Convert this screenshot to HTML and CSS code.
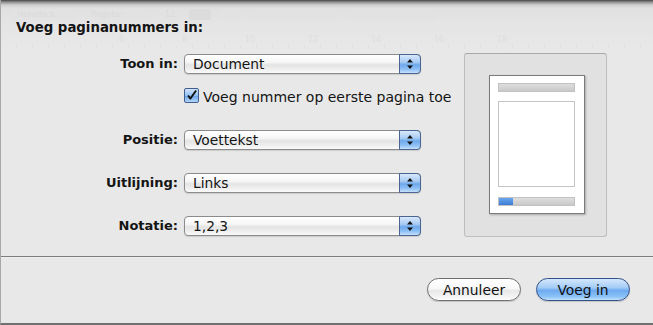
FILE: index.html
```html
<!DOCTYPE html>
<html>
<head>
<meta charset="utf-8">
<title>Voeg paginanummers in</title>
<link rel="stylesheet" href="styles.css">
</head>
<body>
<div class="sheet">

  <!-- window behind the sheet, seen through it -->
  <div class="ghost">
    <div class="ghost-bar">
      <span class="ghost-field wide">Helvetica</span>
      <span class="ghost-field wide">Regular</span>
      <span class="ghost-field">12</span>
      <span class="ghost-field dark"></span>
      <span class="ghost-field"></span>
      <span class="ghost-field long"></span>
      <span class="ghost-field long"></span>
    </div>
    <div class="ghost-ruler">
      <span>6</span><span>8</span><span>10</span><span>12</span><span>14</span><span>16</span><span>18</span>
    </div>
  </div>

  <div class="content">
    <h1 class="title">Voeg paginanummers in:</h1>

    <div class="main">
      <div class="form">
        <label class="lbl">Toon in:</label>
        <div class="popup">
          <span class="popup-text">Document</span>
          <span class="popup-arrows"><svg width="8" height="12" viewBox="0 0 8 12"><path d="M4 1 L7 4.5 L1 4.5 Z M4 11 L7 7.5 L1 7.5 Z" fill="#111"/></svg></span>
        </div>

        <span></span>
        <label class="check">
          <span class="box"><svg width="15" height="15" viewBox="0 0 15 15"><path d="M3.5 7.5 L6.3 11 L12.8 1.8" fill="none" stroke="#111" stroke-width="2.2" stroke-linejoin="round"/></svg></span>
          Voeg nummer op eerste pagina toe
        </label>

        <label class="lbl">Positie:</label>
        <div class="popup">
          <span class="popup-text">Voettekst</span>
          <span class="popup-arrows"><svg width="8" height="12" viewBox="0 0 8 12"><path d="M4 1 L7 4.5 L1 4.5 Z M4 11 L7 7.5 L1 7.5 Z" fill="#111"/></svg></span>
        </div>

        <label class="lbl">Uitlijning:</label>
        <div class="popup">
          <span class="popup-text">Links</span>
          <span class="popup-arrows"><svg width="8" height="12" viewBox="0 0 8 12"><path d="M4 1 L7 4.5 L1 4.5 Z M4 11 L7 7.5 L1 7.5 Z" fill="#111"/></svg></span>
        </div>

        <label class="lbl">Notatie:</label>
        <div class="popup">
          <span class="popup-text">1,2,3</span>
          <span class="popup-arrows"><svg width="8" height="12" viewBox="0 0 8 12"><path d="M4 1 L7 4.5 L1 4.5 Z M4 11 L7 7.5 L1 7.5 Z" fill="#111"/></svg></span>
        </div>
      </div>

      <div class="preview">
        <div class="page">
          <div class="bar"></div>
          <div class="page-body"></div>
          <div class="bar"><div class="bar-fill"></div></div>
        </div>
      </div>
    </div>

    <div class="footer">
      <button class="btn">Annuleer</button>
      <button class="btn default">Voeg in</button>
    </div>
  </div>

</div>
</body>
</html>
```

FILE: styles.css
```css
* {box-sizing: border-box;}
body {margin: 0; background: #e8e8e8; font-family: "DejaVu Sans", "Liberation Sans", sans-serif; color: #141414;}

.sheet {position: relative; width: 653px; height: 325px; overflow: hidden;
  border-left: 1px solid #a8a8a8; border-bottom: 2px solid #6f6f6f;
  background: linear-gradient(#444 0, #8d8d8d 2px, #cfcfcf 5px, #e0e0e0 8px, #e5e5e5 24px, #e8e8e8 50px);}

/* faint window behind */
.ghost {position: absolute; left: 0; top: 9px; right: 0;}
.ghost-bar {display: flex; gap: 8px; height: 12px; padding-left: 10px;}
.ghost-field {height: 11px; width: 22px; border-radius: 2px; background: #e2e2e2; font-size: 8px; line-height: 11px; color: #dadada; padding-left: 6px;}
.ghost-field.wide {width: 66px;}
.ghost-field.dark {background: #dcdcdc;}
.ghost-field.long {width: 90px;}
.ghost-ruler {display: flex; gap: 50px; padding: 14px 0 0 118px; height: 28px;
  font-size: 8px; color: #dedede;
  background: repeating-linear-gradient(90deg, transparent 0, transparent 15px, #e1e1e1 15px, #e1e1e1 16px) 0 24px / 100% 5px no-repeat;}
.ghost-ruler span {width: 13px;}

.content {position: relative; padding: 20px 0 0 15px;}

.title {margin: 0 0 17px; font-size: 13.3px; line-height: 16px; font-weight: bold;}

.main {display: flex; align-items: flex-start;}

.form {display: grid; grid-template-columns: 162px 237px; grid-template-rows: 34px 42px 43px 43px 20px;
  column-gap: 6px; margin-top: 1px; width: 405px;}
.lbl {text-align: right; font-size: 13px; font-weight: bold; line-height: 20px;}

.popup {display: flex; height: 20px; border: 1px solid #8b8b8b; border-radius: 4px;
  background: linear-gradient(#ffffff 0, #f6f6f6 40%, #e4e4e4 55%, #efefef 80%, #fafafa 100%);
  box-shadow: 0 1px 1px rgba(0,0,0,0.12);}
.popup-text {flex: 1; padding-left: 8px; font-size: 13.8px; line-height: 18px; white-space: nowrap;}
.popup-arrows {display: flex; align-items: center; justify-content: center; width: 22px; margin: -1px -1px -1px 0;
  border: 1px solid #4a6591; border-radius: 0 4px 4px 0;
  background: linear-gradient(#d9e8fb 0, #a7cbf3 40%, #6ea8ec 55%, #8fc0f5 80%, #c6e0fb 100%);}

.check {display: flex; align-items: center; gap: 4px; height: 20px; font-size: 14px; white-space: nowrap; margin-top: -1px;}
.box {display: flex; width: 15px; height: 15px; border: 1px solid #3f5d8e; border-radius: 2px; margin-top: -3px;
  background: linear-gradient(#d2e4fb 0, #92c0f2 50%, #6aa5ea 55%, #b3d5f8 100%);}
.box svg {margin: -1px 0 0 0;}

.preview {width: 143px; height: 184px; margin-left: 43px; padding: 21px 0 0 24px;
  border: 1px solid #bdbdbd; border-top-color: #a9a9a9; border-radius: 3px; background: #e1e1e1;}
.page {width: 96px; height: 139px; padding: 7px 9px 7px 8px; border: 1px solid #7b7b7b; background: #fff;
  box-shadow: 1px 1px 2px rgba(0,0,0,0.25);}
.bar {height: 9px; border: 1px solid #c2c2c2; background: linear-gradient(#dedede, #c9c9c9);}
.page-body {height: 86px; margin: 9px 0 10px; border: 1px solid #c4c4c4; background: #fff;}
.bar-fill {width: 14px; height: 7px; background: linear-gradient(#6aa7ee, #3a7bd5);}

.footer {display: flex; justify-content: flex-end; gap: 15px; margin: 19px 0 0 -15px; padding: 21px 23px 0 0;
  border-top: 1px solid #7d7d7d; box-shadow: inset 0 1px 0 #f0f0f0;}
.btn {width: 94px; height: 23px; padding: 0; border: 1px solid #6e6e6e; border-radius: 12px;
  font-family: "DejaVu Sans", "Liberation Sans", sans-serif; font-size: 13.8px; line-height: 20px; color: #111;
  background: linear-gradient(#ffffff 0, #f8f8f8 45%, #e8e8e8 55%, #f4f4f4 85%, #ffffff 100%);
  box-shadow: 0 1px 1px rgba(0,0,0,0.15);}
.btn.default {border-color: #34508a;
  background: linear-gradient(#d4e7fc 0, #a5cdf6 40%, #6eaaf0 55%, #8cc4f7 85%, #c4e2fc 100%);}
```
